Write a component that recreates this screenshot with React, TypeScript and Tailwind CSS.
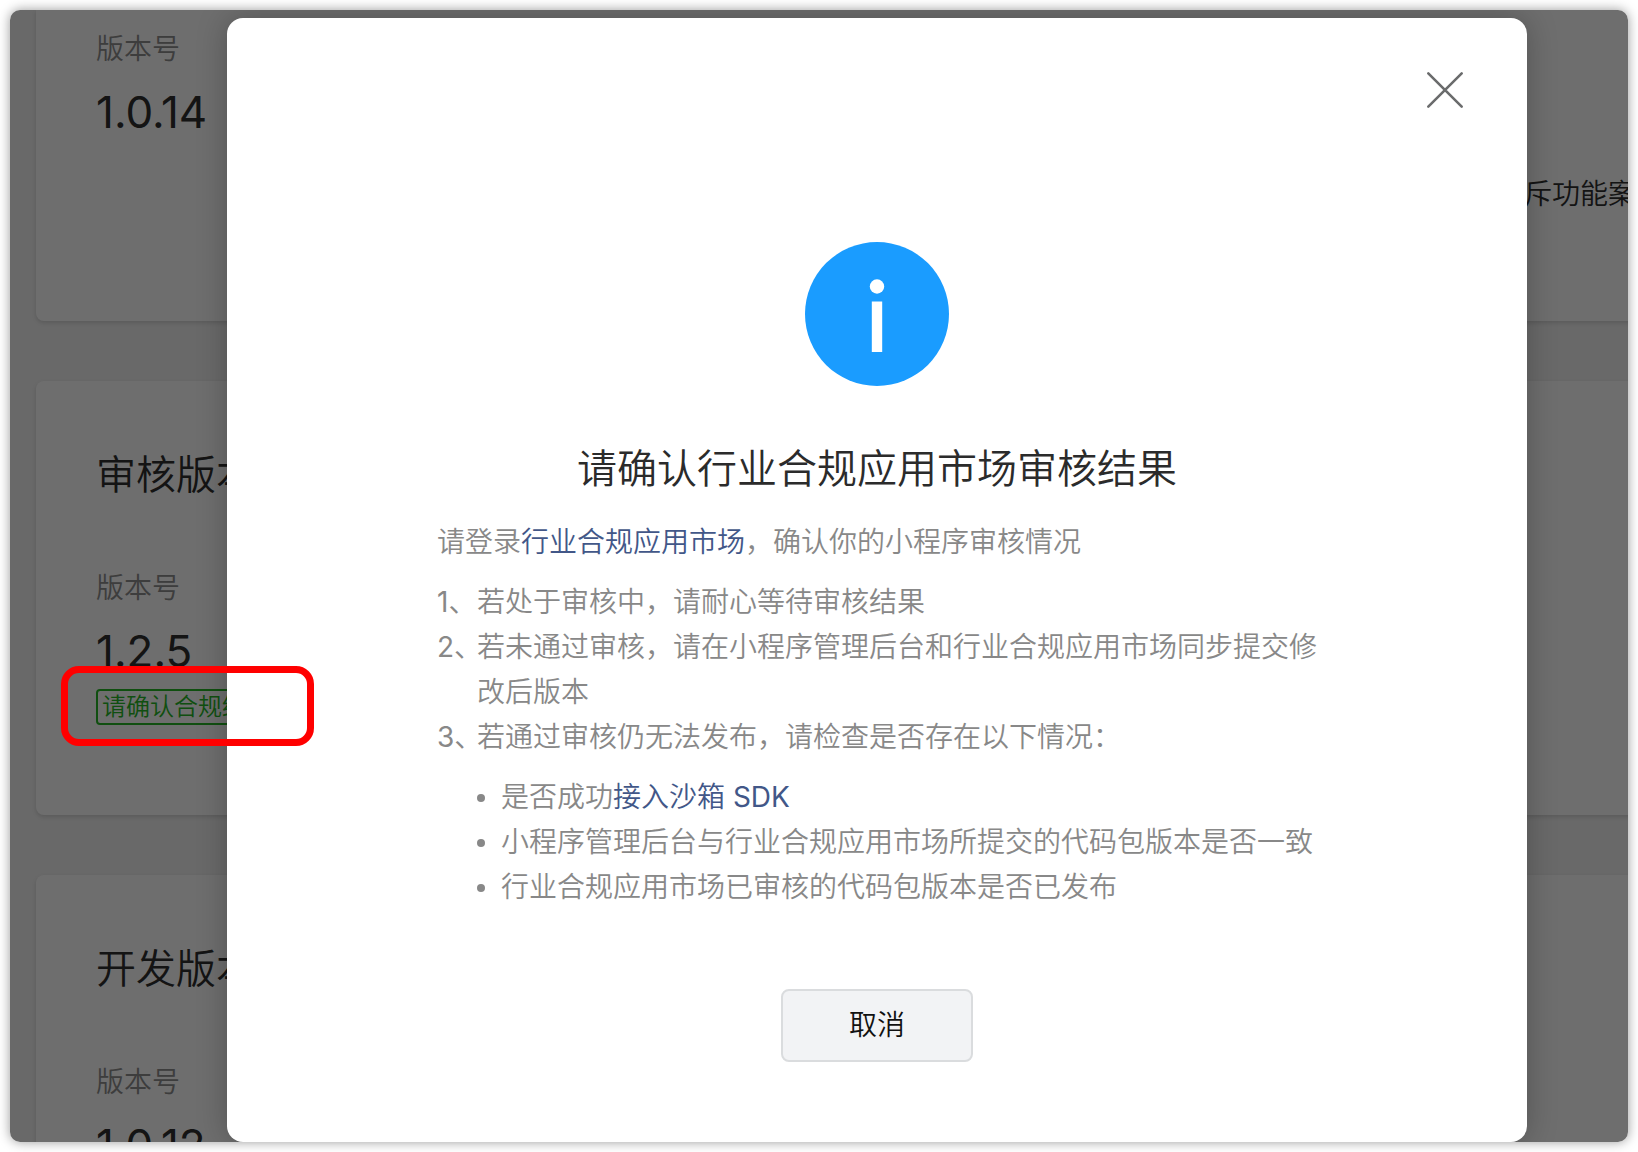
import { useState } from "react";

type Version = {
  title?: string;
  version: string;
  tag?: string;
};

const pending: Version[] = [
  { title: "审核版本", version: "1.2.5", tag: "请确认合规结果" },
  { title: "开发版本", version: "1.0.12" },
];

const steps = [
  "若处于审核中，请耐心等待审核结果",
  "若未通过审核，请在小程序管理后台和行业合规应用市场同步提交修改后版本",
  "若通过审核仍无法发布，请检查是否存在以下情况：",
];

function VersionInfo({ version, tag }: Version) {
  return (
    <dl>
      <dt className="text-[28px] leading-[46px] text-[#8d8d8d]">版本号</dt>
      <dd className="mt-[10px] text-[44px] leading-[60px] font-normal text-[#2f2f2f]">{version}</dd>
      {tag && (
        <dd className="mt-2 flex">
          <span className="rounded border-2 border-[#26b726] px-1 text-[24px] leading-[32px] text-[#26b726]">
            {tag}
          </span>
        </dd>
      )}
    </dl>
  );
}

function VersionList() {
  return (
    <div className="absolute inset-0 -right-10 bg-[#f3f3f3] pl-[26px]">
      <section className="flex h-[311px] justify-between rounded-b-lg bg-white pt-4 pr-8 pl-[60px] shadow-[0_2px_4px_rgba(0,0,0,0.14)]">
        <VersionInfo version="1.0.14" />
        <p className="pt-[146px] text-[28px] leading-[44px] text-[#2f2f2f]">互斥功能案</p>
      </section>
      {pending.map((item) => (
        <section
          key={item.version}
          className="mt-[60px] h-[434px] rounded-lg bg-white px-[60px] pt-16 shadow-[0_2px_4px_rgba(0,0,0,0.14)]"
        >
          <h2 className="mb-[60px] text-[40px] leading-[60px] text-[#2f2f2f]">{item.title}</h2>
          <VersionInfo {...item} />
        </section>
      ))}
    </div>
  );
}

function InfoIcon() {
  return (
    <svg className="h-36 w-36" viewBox="0 0 144 144" aria-hidden="true">
      <circle cx="72" cy="72" r="72" fill="#1a9cff" />
      <circle cx="72" cy="44.500" r="7.200" fill="#fff" />
      <path d="M66.800 59.500h10.400v50.500h-10.400z" fill="#fff" />
    </svg>
  );
}

function BulletItem({ children }: { children: React.ReactNode }) {
  return (
    <li className="flex items-center gap-4 before:h-2 before:w-2 before:shrink-0 before:rounded-full before:bg-[#888]">
      <span>{children}</span>
    </li>
  );
}

function ConfirmDialog({ onClose }: { onClose: () => void }) {
  return (
    <div
      role="dialog"
      aria-modal="true"
      aria-labelledby="dialog-title"
      className="relative flex flex-1 flex-col items-center rounded-2xl bg-white px-10 pt-56 pb-20 shadow-[0_0_30px_rgba(0,0,0,0.25)]"
    >
      <button type="button" aria-label="关闭" onClick={onClose} className="absolute top-12 right-[58px]">
        <svg className="h-12 w-12" viewBox="0 0 48 48" fill="none" stroke="#6b6c6d" strokeWidth="2.600" strokeLinecap="round">
          <path d="M7.300 7.300l33.400 33.400M40.700 7.300l-33.400 33.400" />
        </svg>
      </button>

      <InfoIcon />
      <h1 id="dialog-title" className="mt-[53px] text-[40px] leading-[60px] text-[#2b2b2b]">
        请确认行业合规应用市场审核结果
      </h1>

      <div className="mt-[21px] w-full max-w-[880px] text-[28px] leading-[45px] text-[#888]">
        <p>
          请登录<a href="#market" className="text-[#425788]">行业合规应用市场</a>，确认你的小程序审核情况
        </p>
        <ol className="mt-[15px]">
          {steps.map((step, i) => (
            <li key={step} className="flex">
              <span className="w-10 shrink-0 whitespace-nowrap">
                <span className="font-normal">{i + 1}</span>、
              </span>
              <span>{step}</span>
            </li>
          ))}
        </ol>
        <ul className="mt-[15px] pl-10">
          <BulletItem>
            是否成功
            <a href="#sdk" className="text-[#425788]">
              接入沙箱 <span className="font-normal">SDK</span>
            </a>
          </BulletItem>
          <BulletItem>小程序管理后台与行业合规应用市场所提交的代码包版本是否一致</BulletItem>
          <BulletItem>行业合规应用市场已审核的代码包版本是否已发布</BulletItem>
        </ul>
      </div>

      <button
        type="button"
        onClick={onClose}
        className="mt-[79px] rounded-lg border-2 border-[#dadcde] bg-[#f2f3f5] px-[66px] py-3 text-[28px] leading-[45px] text-[#111]"
      >
        取消
      </button>
    </div>
  );
}

export default function App() {
  const [open, setOpen] = useState(true);

  return (
    <div
      lang="zh-CN"
      className="flex min-h-screen bg-white p-[10px] font-['Inter','Noto_Sans_CJK_SC',sans-serif] font-[350]"
    >
      <main className="relative flex flex-1 overflow-hidden rounded-[10px] shadow-[0_0_12px_rgba(0,0,0,0.4)]">
        <VersionList />
        {open && (
          <div className="relative flex flex-1 bg-black/57 pt-2 pr-[101px] pl-[217px]">
            <ConfirmDialog onClose={() => setOpen(false)} />
          </div>
        )}
        {/* highlight around the compliance tag */}
        <div className="pointer-events-none absolute top-[656px] left-[51px] h-20 w-[253px] rounded-[18px] border-7 border-[#ff0000]" />
      </main>
    </div>
  );
}
